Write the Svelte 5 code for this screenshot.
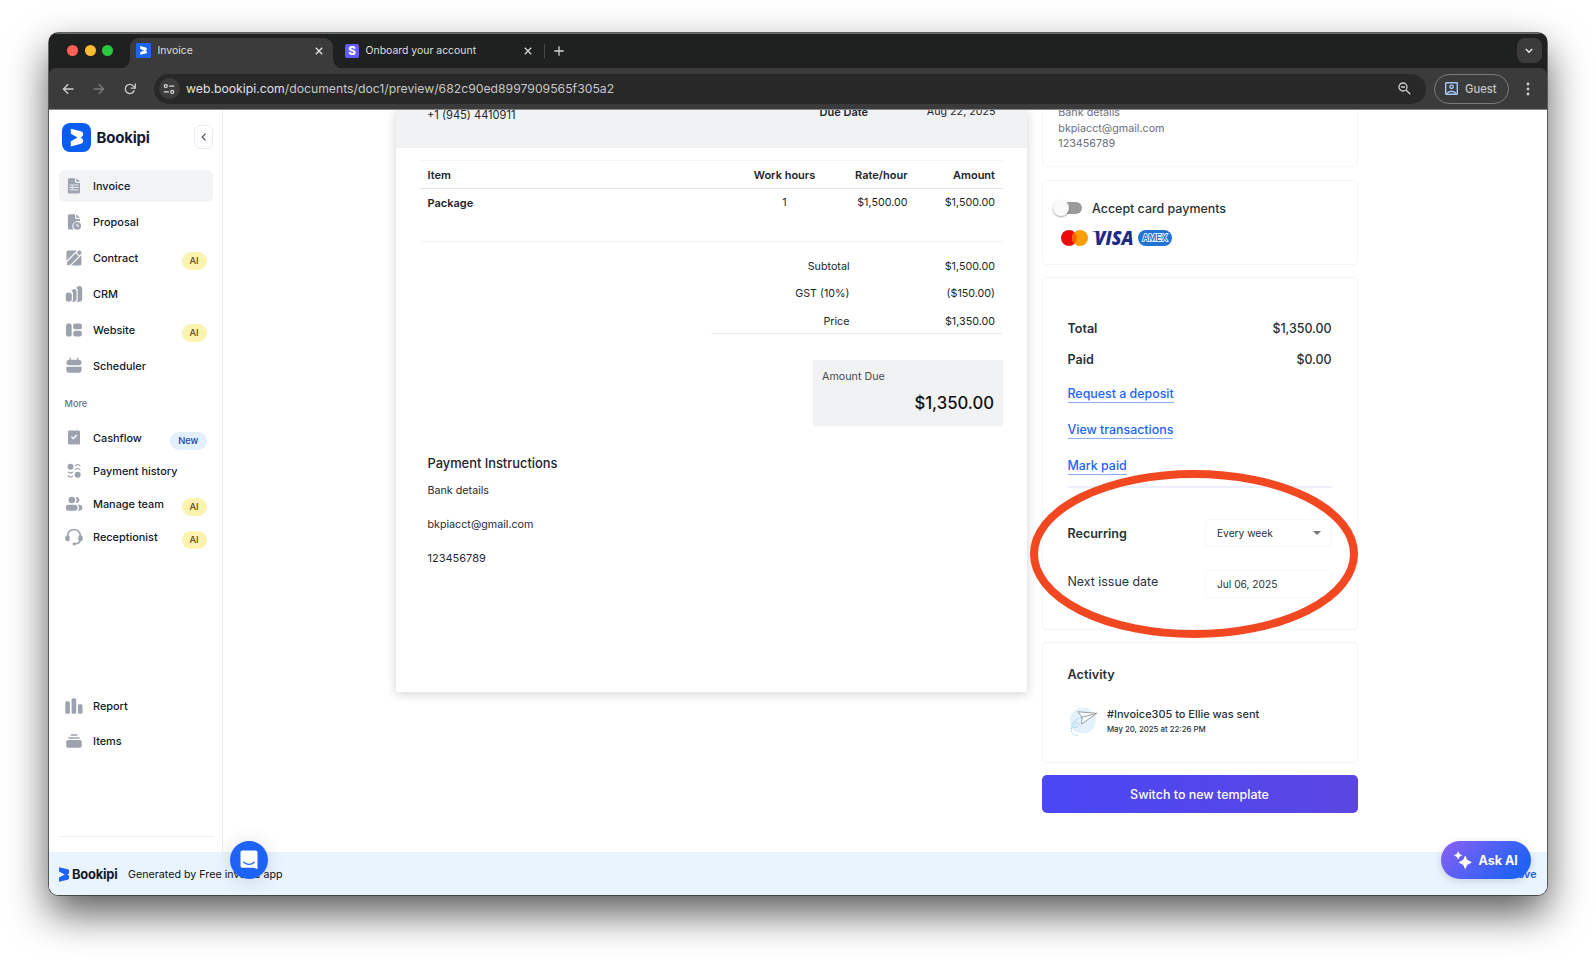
<script lang="ts">
  const mainNav = [
    { icon: 'invoice', label: 'Invoice', active: true },
    { icon: 'proposal', label: 'Proposal' },
    { icon: 'contract', label: 'Contract', badge: 'AI' },
    { icon: 'crm', label: 'CRM' },
    { icon: 'website', label: 'Website', badge: 'AI' },
    { icon: 'scheduler', label: 'Scheduler' }
  ];
  const moreNav = [
    { icon: 'cashflow', label: 'Cashflow', badge: 'New' },
    { icon: 'payments', label: 'Payment history' },
    { icon: 'team', label: 'Manage team', badge: 'AI' },
    { icon: 'receptionist', label: 'Receptionist', badge: 'AI' }
  ];
  const bottomNav = [
    { icon: 'report', label: 'Report' },
    { icon: 'items', label: 'Items' }
  ];
  const sums = [
    ['Subtotal', '$1,500.00'],
    ['GST (10%)', '($150.00)'],
    ['Price', '$1,350.00']
  ];
  const actions = ['Request a deposit', 'View transactions', 'Mark paid'];
</script>

{#snippet mark(color: string)}
  <path fill={color} d="M0 .2 9.800 2.500C11.300 2.900 12 3.700 12 4.900 12 6.600 10.900 7.600 9.200 8 10.900 8.400 12 9.400 12 11.100 12 12.300 11.300 13.100 9.800 13.500L0 15.800V11.300L6.600 8 0 4.700Z" />
{/snippet}

{#snippet glyph(name: string)}
  <svg class="glyph" viewBox="0 0 18 18" width="18" height="18" fill="#9ca3af">
    {#if name === 'invoice'}
      <path d="M4.600 1.200H10v3.300c0 .8.600 1.400 1.400 1.400H15v9c0 1-.7 1.700-1.700 1.700H4.600c-1 0-1.700-.7-1.700-1.700v-12c0-1 .7-1.700 1.700-1.700Z" />
      <path d="M11.300 1.200 15 4.800h-3.100c-.4 0-.6-.2-.6-.6Z" />
      <path d="M4.500 8h9M4.500 10.400h9M4.500 12.900h9M7.200 8v5" stroke="#f3f4f6" stroke-width=".9" />
    {:else if name === 'proposal'}
      <path d="M4.600 1.200H10v3.300c0 .8.600 1.400 1.400 1.400H15v2.300c-4.600-1.400-8.500 2.200-7.400 6.200.2.800.6 1.500 1.200 2.200H4.600c-1 0-1.700-.7-1.700-1.700v-12c0-1 .7-1.700 1.700-1.700Z" />
      <path d="M11.300 1.200 15 4.800h-3.100c-.4 0-.6-.2-.6-.6Z" />
      <circle cx="12.200" cy="12.900" r="3.800" />
      <path d="M12 10.800v2.300h2.100" stroke="#fff" stroke-width="1" fill="none" />
    {:else if name === 'contract'}
      <path d="M3.500 1.500h8.400L1.500 11.800V3.500c0-1.200.8-2 2-2ZM16.500 6.300v8.200c0 1.200-.8 2-2 2H6.200Z" />
      <path d="m2.300 12.700 8.500-8.500 3 3-8.500 8.500-3.500.6ZM11.600 3.400l1.700-1.600c1.700-1.300 4.300 1 2.800 3l-1.500 1.600Z" />
    {:else if name === 'crm'}
      <rect x=".8" y="7.600" width="6" height="9.200" rx="2.700" />
      <path d="M7.600 4.700c1.800-1.500 4-.2 4 2v7.400c0 1.300-.8 2.400-2.200 2.600H6.900c.7-.6 1.100-1.400 1.100-2.400V8.500c0-1.200-.6-2.200-1.700-2.700Z" />
      <path d="M12.700 1.500c2-1.300 4.500-.2 4.500 2.100v10.500c0 1.400-1 2.600-2.500 2.600h-2.900c.6-.7.900-1.500.9-2.400V5.500c0-1.200-.6-2.100-1.500-2.700Z" />
    {:else if name === 'website'}
      <rect x="1" y="2.600" width="5.700" height="13" rx="2.200" />
      <rect x="8.200" y="2.600" width="8.700" height="5.700" rx="1.900" />
      <rect x="8.200" y="9.800" width="8.700" height="5.800" rx="2.400" />
    {:else if name === 'scheduler'}
      <path d="M5.200 1.200v3M12.800 1.200v3" stroke="#9ca3af" stroke-width="1.300" stroke-linecap="round" />
      <path d="M4.200 2.700h9.600c1.700 0 2.800 1.200 2.800 2.800 0 1.700-1.100 2.700-2.800 2.700H4.200c-1.700 0-2.800-1-2.800-2.700 0-1.600 1.100-2.800 2.800-2.800ZM1.400 9.800h15.200v2.900c0 1.900-1.300 3.100-3.100 3.100h-9c-1.800 0-3.100-1.200-3.100-3.100Z" />
    {:else if name === 'cashflow'}
      <path d="M4.500 1.500h9c.9 0 1.500.7 1.500 1.500v12.800l-1.500-.9-1.500.9-1.500-.9-1.500.9-1.500-.9-1.500.9-1.500-.9-1.500.9V3c0-.8.600-1.500 1.500-1.500Z" />
      <path d="m6.400 7.700 1.900 1.800 3.500-3.600" fill="none" stroke="#fff" stroke-width="1.400" />
    {:else if name === 'payments'}
      <circle cx="5.500" cy="4.800" r="3" /><circle cx="12.700" cy="12.700" r="3" />
      <path d="M2.400 9.300c1.900 1.400 4.400 1.400 6.200 0-.4 3.300-5.800 3.300-6.200 0ZM9.600 8.400c1.900-1.400 4.400-1.400 6.200 0-.4-3.300-5.800-3.300-6.200 0Z" />
      <path d="M2.900 13.500c1.600 1.900 3.900 1.900 5.400 0M10 4c1.600-1.900 3.900-1.900 5.400 0" fill="none" stroke="#9ca3af" stroke-width="1.200" />
    {:else if name === 'team'}
      <circle cx="6.800" cy="5" r="3.300" /><rect x=".8" y="9.700" width="11.800" height="6" rx="2.900" />
      <path d="M10.700 7.900c1.300-1.600 1.300-4.200 0-5.900 4.900-.9 4.900 6.800 0 5.900ZM13 9.700h1.400c1.700 0 3 1.300 3 3s-1.300 3-3 3H13c1.400-1.800 1.400-4.300 0-6Z" />
    {:else if name === 'receptionist'}
      <path d="M2.800 9.700V7.400C2.800 4 5.500 1.400 9 1.400S15.200 4 15.200 7.400v4c0 2.500-1.600 4.200-5 4.400" fill="none" stroke="#9ca3af" stroke-width="1.500" />
      <rect x=".4" y="7.200" width="4.300" height="6" rx="2" /><rect x="13.300" y="7.200" width="4.300" height="6" rx="2" /><circle cx="9.200" cy="15.800" r="1.600" />
    {:else if name === 'report'}
      <rect x=".3" y="4.200" width="4.600" height="12.500" rx="1.500" /><rect x="6.600" y="1.200" width="4.600" height="15.500" rx="1.500" /><rect x="12.900" y="7.200" width="4.600" height="9.500" rx="1.500" />
    {:else if name === 'items'}
      <path d="M3.200 8h11.600c1.200 0 2 .8 2 2v3.700c0 1.200-.8 2-2 2H3.200c-1.200 0-2-.8-2-2V10c0-1.200.8-2 2-2Z" />
      <path d="M3.900 5.900h10.200M6.200 3h5.600" stroke="#9ca3af" stroke-width="1.500" stroke-linecap="round" />
    {/if}
  </svg>
{/snippet}

{#snippet navRow(item)}
  <div class="nav-row" class:active={item.active}>
    {@render glyph(item.icon)}
    <span>{item.label}</span>
    {#if item.badge}<em class="badge" class:new={item.badge === 'New'}>{item.badge}</em>{/if}
  </div>
{/snippet}

<div class="desk">
  <div class="window">
    <div class="tabs">
      <div class="lights"><i class="r"></i><i class="y"></i><i class="g"></i></div>
      <div class="tab on">
        <svg class="fav" viewBox="0 0 15 15" width="15" height="15"><rect width="15" height="15" rx=".8" fill="#1d63f5" /><g transform="translate(4.200 3) scale(.56 .56)">{@render mark('#fff')}</g></svg>
        <span>Invoice</span>
        <svg class="x" viewBox="0 0 8 8" width="8" height="8"><path d="m.8.8 6.400 6.400M7.200.8.8 7.200" stroke="#e3e3e3" stroke-width="1.300" /></svg>
      </div>
      <div class="tab two">
        <div class="stripe">S</div>
        <span>Onboard your account</span>
        <svg class="x" viewBox="0 0 8 8" width="8" height="8"><path d="m.8.8 6.400 6.400M7.200.8.8 7.200" stroke="#d5d5d5" stroke-width="1.300" /></svg>
      </div>
      <i class="tab-sep"></i>
      <svg class="plus" viewBox="0 0 10 10" width="10" height="10"><path d="M5 .3v9.400M.3 5h9.400" stroke="#d5d5d5" stroke-width="1.300" /></svg>
      <div class="tab-list"><svg viewBox="0 0 8 6" width="8" height="6"><path d="m.8 1 3.200 3.200L7.200 1" fill="none" stroke="#e3e3e3" stroke-width="1.500" /></svg></div>
    </div>

    <div class="toolbar">
      <svg class="nav-ic" viewBox="0 0 12 12" width="12" height="12"><path d="M11.500 6H1.500M6.200 1.200 1.400 6l4.800 4.800" fill="none" stroke="#cfcfcf" stroke-width="1.300" /></svg>
      <svg class="nav-ic" viewBox="0 0 12 12" width="12" height="12"><path d="M.5 6h10M5.800 1.200 10.600 6l-4.800 4.800" fill="none" stroke="#7b7b7b" stroke-width="1.300" /></svg>
      <svg class="nav-ic" viewBox="0 0 12 12" width="12" height="12"><path d="M10.300 7.300A4.600 4.600 0 1 1 9.700 3.300L10.500 4.500" fill="none" stroke="#cfcfcf" stroke-width="1.300" /><path d="M11.300.6v4.600H6.700" fill="none" stroke="#cfcfcf" stroke-width="1.300" /></svg>
      <div class="url">
        <div class="site"><svg viewBox="0 0 12 12" width="12" height="12" fill="none" stroke="#dcdcdc" stroke-width="1.200"><circle cx="2.800" cy="3.100" r="1.500" /><path d="M6.200 3.100h5M.8 8.900h5" /><circle cx="9.200" cy="8.900" r="1.500" /></svg></div>
        <span><b>web.bookipi.com</b>/documents/doc1/preview/682c90ed8997909565f305a2</span>
        <svg class="mag" viewBox="0 0 13 13" width="13" height="13" fill="none" stroke="#cfcfcf" stroke-width="1.300"><circle cx="5" cy="5" r="4" /><path d="m8 8 4.300 4.300M3 5h4" /></svg>
      </div>
      <div class="guest">
        <svg viewBox="0 0 13 13" width="13" height="13" fill="none" stroke="#a8c7fa" stroke-width="1.400"><rect x=".7" y=".7" width="11.600" height="11.600" rx=".6" /><circle cx="6.500" cy="4.800" r="1.700" /><path d="M1.800 11.600c2-3.200 7.400-3.200 9.400 0" /></svg>
        Guest
      </div>
      <svg class="dots" viewBox="0 0 4 14" width="4" height="14" fill="#cfcfcf"><circle cx="2" cy="2" r="1.400" /><circle cx="2" cy="7" r="1.400" /><circle cx="2" cy="12" r="1.400" /></svg>
    </div>

    <div class="page">
      <div class="body">
        <aside>
          <div class="brand">
            <svg viewBox="0 0 29 29" width="29" height="29"><rect width="29" height="29" rx="8" fill="#0b5cf0" /><g transform="translate(8.800 5.400) scale(1.030 1.140)">{@render mark('#fff')}</g></svg>
            <strong>Bookipi</strong>
            <button aria-label="Collapse"><svg viewBox="0 0 6 8" width="6" height="8"><path d="M4.600.6 1.200 4l3.400 3.400" fill="none" stroke="#4b5563" stroke-width="1.200" /></svg></button>
          </div>
          <nav class="main">{#each mainNav as item}{@render navRow(item)}{/each}</nav>
          <div class="more">More</div>
          <nav class="second">{#each moreNav as item}{@render navRow(item)}{/each}</nav>
          <nav class="third">{#each bottomNav as item}{@render navRow(item)}{/each}</nav>
          <hr />
        </aside>

        <main>
          <section class="paper">
            <header>
              <span>+1 (945) 4410911</span>
              <div><b>Due Date</b><span>Aug 22, 2025</span></div>
            </header>
            <div class="grid head"><b>Item</b><b class="c">Work hours</b><b class="e">Rate/hour</b><b class="e">Amount</b></div>
            <div class="grid line"><b>Package</b><span class="c">1</span><span class="e">$1,500.00</span><span class="e">$1,500.00</span></div>
            <div class="sums">
              {#each sums as [label, value]}<div><span>{label}</span><span>{value}</span></div>{/each}
            </div>
            <div class="due"><span>Amount Due</span><strong>$1,350.00</strong></div>
            <div class="pay">
              <h3>Payment Instructions</h3>
              <p>Bank details</p><p>bkpiacct@gmail.com</p><p class="num">123456789</p>
            </div>
          </section>

          <section class="side">
            <div class="card bank"><p>Bank details</p><p>bkpiacct@gmail.com</p><p>123456789</p></div>
            <div class="card accept">
              <div class="toggle-row"><div class="toggle"><i></i></div><span>Accept card payments</span></div>
              <div class="cards">
                <svg viewBox="0 0 27 16" width="27" height="16"><circle cx="8" cy="8" r="8" fill="#eb0a0b" /><circle cx="19" cy="8" r="8" fill="#f99f09" /><path d="M13.500 2.200a8 8 0 0 1 0 11.600 8 8 0 0 1 0-11.600Z" fill="#ff5f00" /></svg>
                <svg class="visa" viewBox="0 0 42 18" width="42" height="18"><text x="2.500" y="15.700" textLength="39" lengthAdjust="spacingAndGlyphs" font-family="Open Sans" font-weight="800" font-style="italic" font-size="18.500" fill="#1d2a86">VISA</text><path d="M.2 2.200h6l1.800 4.500C6 4 3.500 2.900.2 2.500Z" fill="#1d2a86" /></svg>
                <svg viewBox="0 0 34 16" width="34" height="16"><rect width="34" height="16" rx="8" fill="#2173d4" /><text x="4.500" y="11.300" textLength="25" lengthAdjust="spacingAndGlyphs" font-family="Inter" font-weight="600" font-size="8.600" fill="#2173d4" stroke="#fff" stroke-width="1.600" paint-order="stroke">AMEX</text></svg>
              </div>
            </div>
            <div class="card totals">
              <div class="kv"><b>Total</b><span>$1,350.00</span></div>
              <div class="kv"><b>Paid</b><span>$0.00</span></div>
              <div class="links">{#each actions as a}<div><a href="#top">{a}</a></div>{/each}</div>
              <div class="rule"></div>
              <div class="field rec"><b>Recurring</b><div class="input">Every week<svg viewBox="0 0 8 4" width="8" height="4"><path d="M0 0h8L4 4Z" fill="#757575" /></svg></div></div>
              <div class="field next"><span>Next issue date</span><div class="input">Jul 06, 2025</div></div>
              <svg class="ring" viewBox="0 0 328 168" width="328" height="168"><ellipse cx="164" cy="84" rx="160" ry="80" fill="none" stroke="#f24822" stroke-width="8" /></svg>
            </div>
            <div class="card activity">
              <h4>Activity</h4>
              <div class="event">
                <svg viewBox="0 0 28 30" width="28" height="30"><circle cx="12.700" cy="13.500" r="13" fill="#e3f1fa" /><path d="M11.500 10.500C5 12 1 17.500 1.500 24c.5 3 3 4.500 7 4.800M2.500 20c3 1.500 7.500-.5 6-3.500-1.500-2-5 0-3.500 3" fill="none" stroke="#74c8ea" stroke-width=".8" stroke-dasharray="1.500 1" /><path d="M7.800 4.700 26.700 6.300 11.500 17.200 12 10.200Z" fill="#f8fafc" stroke="#878c91" stroke-width=".8" stroke-linejoin="round" /><path d="m12 10.200 14.700-3.900" stroke="#878c91" stroke-width=".8" /></svg>
                <div><strong>#Invoice305 to Ellie was sent</strong><small>May 20, 2025 at 22:26 PM</small></div>
              </div>
            </div>
            <button class="switch">Switch to new template</button>
          </section>
        </main>
      </div>

      <footer>
        <svg viewBox="0 0 12 16" width="10.500" height="15" preserveAspectRatio="none">{@render mark('#1d63f5')}</svg>
        <strong>Bookipi</strong>
        <span>Generated by Free invoice app</span>
        <a href="#top">Remove</a>
      </footer>
      <div class="chat"><svg viewBox="0 0 18 20" width="18" height="20"><path d="M2.300.5h13.400c1 0 1.800.8 1.800 1.800v17l-3.600-1.600H2.300c-1 0-1.800-.8-1.800-1.800V2.300C.5 1.300 1.300.5 2.300.5Z" fill="#fff" /><path d="M3.600 12.200c3.300 2.600 7.500 2.600 10.800 0" fill="none" stroke="#1d63f5" stroke-width="1.100" stroke-linecap="round" /></svg></div>
      <div class="ask"><svg viewBox="0 0 18 18" width="18" height="18" fill="#fff" stroke="#fff" stroke-linejoin="round"><path d="M11.200 5.600c1 3.400 1.900 4.500 5.600 5.700-3.700 1.200-4.600 2.300-5.600 5.700-1-3.400-1.900-4.500-5.600-5.700 3.700-1.200 4.600-2.300 5.600-5.700Z" stroke-width="1.300" /><path d="M4.100.8c.6 2.200 1.200 2.900 3.600 3.600-2.400.7-3 1.400-3.600 3.600C3.500 5.800 2.900 5.100.5 4.400 2.900 3.700 3.500 3 4.100.8Z" stroke-width=".8" /></svg>Ask AI</div>
    </div>
  </div>
</div>

<style>
  :global(body) { background: #fff; }
  .desk, .desk * { box-sizing: border-box; }
  .desk { width: 1596px; height: 960px; padding: 33px 49px; overflow: hidden; font-family: Inter, sans-serif; color: #1f2937; }
  svg { display: block; flex: none; }
  p, h3, h4 { margin: 0; }
  i { display: block; flex: none; }
  .window { width: 1498px; height: 862px; border-radius: 9px; background: #1f2120; display: flex; flex-direction: column; overflow: hidden; box-shadow: 0 0 0 .7px #333, 0 18px 40px rgba(0, 0, 0, .66); }

  .tabs { height: 35px; flex: none; display: flex; align-items: center; padding-bottom: 1px; background: #1f2120; border-top: 1px solid #6a6a6a; }
  .lights { display: flex; gap: 6.500px; padding-left: 18.200px; width: 81px; }
  .lights i { width: 11px; height: 11px; border-radius: 50%; }
  .r { background: #ff5f57; } .y { background: #febc2e; } .g { background: #28c840; }
  .tab { display: flex; align-items: center; font-size: 10.450px; color: #dedede; }
  .tab span { margin-left: 6.500px; flex: 1; white-space: nowrap; }
  .tab.on { position: relative; width: 203px; height: 31px; margin-top: 5px; padding: 0 10.500px 5px 6px; background: #3b3b3b; border-radius: 9px 9px 0 0; }
  .tab.on::before, .tab.on::after { content: ''; position: absolute; bottom: 0; width: 10px; height: 10px; }
  .tab.on::before { left: -10px; background: radial-gradient(circle at 0 0, transparent 9.500px, #3b3b3b 10px); }
  .tab.on::after { right: -10px; background: radial-gradient(circle at 100% 0, transparent 9.500px, #3b3b3b 10px); }
  .tab.two { width: 199px; padding-left: 12px; }
  .stripe { width: 14px; height: 14px; border-radius: 2px; background: #635bff; color: #fff; font: 800 11.500px/14px Inter, sans-serif; text-align: center; }
  .tab-sep { width: 1px; height: 14px; margin-left: 11.500px; background: #454746; }
  .plus { margin-left: 9px; }
  .tab-list { margin: 0 5.500px 0 auto; width: 24.500px; height: 24.500px; border-radius: 8px; background: #3b3b3b; display: grid; place-items: center; }

  .toolbar { height: 41.500px; flex: none; display: flex; align-items: center; padding: 1px 17.500px 0 13px; background: #3b3b3b; border-bottom: 1px solid #858585; border-radius: 7px 7px 0 0; }
  .nav-ic { margin-right: 19.200px; }
  .url { width: 1272px; height: 29.500px; border-radius: 15px; margin-left: -1.500px; background: #282828; display: flex; align-items: center; padding: 0 15px 0 4.500px; font-size: 12.230px; color: #c7c7c7; }
  .url b { font-weight: 400; color: #e3e3e3; }
  .url span { flex: 1; margin-left: 6.500px; }
  .site { width: 21px; height: 21px; border-radius: 50%; background: #3c3c3c; display: grid; place-items: center; }
  .guest { width: 75px; height: 30px; margin-left: 8px; border: 1px solid #7b7b7b; border-radius: 15px; display: flex; align-items: center; gap: 7.500px; padding-left: 9.500px; font-size: 11.200px; font-weight: 500; color: #c7c7c7; }
  .dots { margin-left: auto; }

  .page { position: relative; flex: 1; min-height: 0; display: flex; flex-direction: column; background: #fff; }
  .body { height: 742.500px; display: flex; overflow: hidden; }
  aside { width: 174px; flex: none; border-right: 1px solid #ececee; padding: 0 9px 0 9.500px; display: flex; flex-direction: column; }
  .brand { display: flex; align-items: center; height: 29px; margin-top: 13px; padding-left: 3.500px; }
  .brand strong, footer strong { font-weight: 700; color: #111c33; }
  .brand strong { font-size: 15px; letter-spacing: -.2px; margin-left: 5.500px; flex: 1; padding-top: 1px; }
  .brand button { width: 19px; height: 24px; padding: 0; border: 1px solid #ececee; border-radius: 6px; background: #fff; display: grid; place-items: center; }
  .main { margin-top: 18px; display: flex; flex-direction: column; gap: 4.200px; }
  .nav-row { display: flex; align-items: center; height: 32px; padding: 0 6.500px 0 6.500px; font-size: 10.900px; font-weight: 500; color: #111827; border-radius: 6px; }
  .nav-row.active { background: #f2f3f5; }
  .nav-row > span { flex: 1; margin-left: 10px; white-space: nowrap; }
  .badge { position: relative; top: 3px; width: 25px; height: 18px; border-radius: 9px; background: #fdf3b0; color: #723b13; font: 500 9.400px/18px Inter, sans-serif; text-align: center; }
  .badge.new { width: 36.500px; background: #e1effe; color: #1e429f; }
  .more { margin-top: 15px; height: 14px; line-height: 14px; padding-left: 6px; font-size: 9.200px; font-weight: 500; color: #6b7280; }
  .second { margin-top: 10.800px; display: flex; flex-direction: column; gap: 1px; }
  .third { margin-top: 136.500px; display: flex; flex-direction: column; gap: 3px; }
  hr { width: 155px; margin: 79.500px 0 0; border: 0; border-top: 1px solid #f0f0f2; }

  main { flex: 1; display: flex; align-items: flex-start; padding-left: 173px; }
  .paper { width: 630.500px; height: 582.500px; background: #fff; box-shadow: 0 2px 10px rgba(0, 0, 0, .18); font-size: 10.720px; color: #212529; }
  .paper b { font-weight: 600; font-size: 11px; }
  header { height: 38.700px; background: #f1f2f4; display: flex; justify-content: space-between; padding: 0 31px; font-size: 11.100px; }
  header > span { line-height: 10px; }
  header div { display: flex; width: 176px; justify-content: space-between; line-height: 4.500px; font-size: 10.700px; }
  .grid { display: grid; grid-template-columns: 1fr 92px 77px 87.500px; margin: 0 24px 0 23.500px; padding: 0 7.500px 0 8px; width: 583px; }
  .head { height: 29px; line-height: 28.500px; margin-top: 12px; border-top: 1px solid #f4f4f6; border-bottom: 1px solid #e4e5ee; }
  .line { height: 53px; line-height: 28.500px; border-bottom: 1px solid #f3f3f5; }
  .c { text-align: center; } .e { text-align: right; }
  .sums { width: 291px; margin-left: 315px; padding: 11px 7px 0 0; height: 92px; border-bottom: 1px solid #ebebed; }
  .sums div { display: grid; grid-template-columns: 138.500px 1fr; height: 27.200px; line-height: 27.200px; text-align: right; }
  .due { margin: 26px 0 0 417px; width: 189.500px; height: 66px; background: #f1f2f4; padding: 0 8.500px 0 9px; display: flex; flex-direction: column; }
  .due span { line-height: 33px; color: #4a4a4a; }
  .due strong { font-weight: 500; font-size: 16.700px; line-height: 20px; text-align: right; color: #111; }
  .pay { margin: 28.500px 0 0 31.500px; color: #1f2937; }
  .pay h3 { font-weight: 500; font-size: 12.870px; line-height: 18px; margin-bottom: 9px; color: #212529; }
  .pay p { line-height: 17px; margin-bottom: 17px; }
  .pay .num { font-size: 11px; }

  .side { width: 316px; margin-left: 15px; color: #263238; }
  .card { border: 1px solid #f3f4f5; border-radius: 5px; background: #fff; }
  .bank { height: 57.700px; border-top: 0; border-radius: 0 0 5px 5px; padding-left: 15.800px; color: #6b6f7b; font-size: 10.750px; }
  .bank p { line-height: 15.800px; position: relative; top: -4.700px; }
  .accept { height: 85px; margin-top: 13px; padding: 18.500px 0 0 9.500px; }
  .toggle-row { display: flex; align-items: center; height: 17px; font-size: 12.450px; font-weight: 500; }
  .toggle { width: 30px; margin-right: 10px; height: 11.500px; background: linear-gradient(#9b9b9b, #9b9b9b) 6px 0 / 24px 100% no-repeat; border-radius: 6px; display: flex; align-items: center; }
  .toggle i { width: 16px; height: 16px; border-radius: 50%; background: #fafafa; box-shadow: 0 1px 2px rgba(0, 0, 0, .35); margin-left: 1px; }
  .cards { display: flex; align-items: center; gap: 4px; margin: 13px 0 0 8.500px; height: 16px; }
  .totals { position: relative; height: 353px; margin-top: 12px; padding: 34.500px 25px 0; font-size: 12.400px; }
  .card b, .card h4 { font-weight: 600; font-size: 12.520px; }
  .card h4 { font-size: 12.700px; }
  .kv { display: flex; justify-content: space-between; height: 31.500px; line-height: 31.500px; font-weight: 500; }
  .links { margin-top: 9.500px; }
  .links div { height: 36px; }
  .links a { display: inline-block; height: 17.500px; line-height: 17.500px; color: #1c64f2; font-weight: 500; text-decoration: none; border-bottom: 1px solid #8cb0f8; }
  .rule { height: 2px; margin-top: -7px; background: #edf0fb; }
  .field { display: flex; justify-content: space-between; align-items: center; }
  .input { width: 127px; height: 28px; border: 1px solid #f7f7f8; border-radius: 4px; padding: 0 10px 0 11.500px; display: flex; align-items: center; justify-content: space-between; font-size: 10.200px; }
  .rec { margin-top: 31px; }
  .next { margin-top: 22.500px; }
  .next > span { position: relative; top: -2px; }
  .ring { position: absolute; left: -12.500px; top: 192px; z-index: 3; }
  .activity { height: 121px; margin-top: 12px; padding: 21.500px 25px 0; }
  .activity h4 { line-height: 20px; }
  .event { display: flex; margin-top: 22px; padding-left: 2.500px; }
  .event div { margin-left: 9px; display: flex; flex-direction: column; }
  .event strong { font-weight: 500; font-size: 10.950px; line-height: 15px; }
  .event small { font-weight: 500; font-size: 7.800px; line-height: 15px; }
  .switch { display: block; width: 316px; height: 38px; margin-top: 12px; padding: 1px 0 0; border: 0; border-radius: 5px; background: linear-gradient(90deg, #4a47f5, #5b46e2); color: #fff; font: 500 12.480px Inter, sans-serif; }

  footer { flex: 1; background: #e9f4ff; display: flex; align-items: center; padding: 2px 10.500px 0 9.500px; font-size: 10.700px; color: #111; }
  footer strong { font-size: 12.900px; letter-spacing: -.2px; margin-left: 3px; }
  footer span { margin-left: 10.500px; flex: 1; }
  footer a { color: #1c64f2; font-weight: 600; text-decoration: none; }
  .chat { position: absolute; left: 181px; bottom: 16px; width: 38px; height: 38px; border-radius: 50%; background: #1d63f5; display: grid; place-items: center; box-shadow: 0 2px 20px rgba(0, 0, 0, .14); }
  .ask { position: absolute; right: 16px; bottom: 16px; width: 90px; height: 38px; border-radius: 19px; background: linear-gradient(135deg, #8560f6 5%, #1f62f4 85%); display: flex; align-items: center; gap: 6.500px; padding-left: 13px; font-size: 12.500px; font-weight: 700; color: #fff; white-space: nowrap; box-shadow: 0 2px 8px rgba(0, 0, 0, .15); }
</style>
